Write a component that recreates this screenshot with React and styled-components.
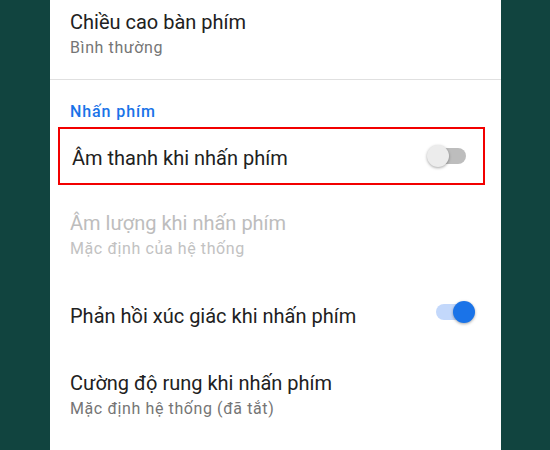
import React from "react";
import styled, { createGlobalStyle } from "styled-components";

const GlobalStyle = createGlobalStyle`
  html, body {
    margin: 0;
    padding: 0;
    background: #11443f;
    font-family: Roboto, "Noto Sans", "Liberation Sans", sans-serif;
  }
`;

const Switch = ({ on }) => (
  <SwitchBox $on={on}>
    <Track $on={on} />
    <Thumb $on={on} />
  </SwitchBox>
);

const App = () => {
  return (
    <>
      <GlobalStyle />
      <Panel>
        <Row $pad="9px 26px 20px 20px">
          <Texts>
            <Title>Chiều cao bàn phím</Title>
            <Sub>Bình thường</Sub>
          </Texts>
        </Row>
        <Divider />
        <Header>Nhấn phím</Header>
        <Marked>
          <Title $shift>Âm thanh khi nhấn phím</Title>
          <Switch on={false} />
        </Marked>
        <Row $pad="22px 26px 21px 20px">
          <Texts>
            <Title $disabled>Âm lượng khi nhấn phím</Title>
            <Sub $disabled>Mặc định của hệ thống</Sub>
          </Texts>
        </Row>
        <Row $pad="22px 26px 20px 20px">
          <Title>Phản hồi xúc giác khi nhấn phím</Title>
          <Switch on={true} />
        </Row>
        <Row>
          <Texts>
            <Title>Cường độ rung khi nhấn phím</Title>
            <Sub>Mặc định hệ thống (đã tắt)</Sub>
          </Texts>
        </Row>
      </Panel>
    </>
  );
};

export default App;

const Panel = styled.div`
  margin: 0 49px 0 50px;
  min-height: 100vh;
  background: #ffffff;
  display: flex;
  flex-direction: column;
`;

const Row = styled.div`
  display: flex;
  align-items: center;
  justify-content: space-between;
  padding: ${(p) => p.$pad || "21px 26px 21px 20px"};
`;

const Texts = styled.div`
  display: flex;
  flex-direction: column;
  gap: 2px;
`;

const Title = styled.div`
  font-size: 20px;
  line-height: 26px;
  color: ${(p) => (p.$disabled ? "#bdbdbd" : "#212121")};
  margin-top: ${(p) => (p.$shift ? "4px" : "0")};
`;

const Sub = styled.div`
  font-size: 16px;
  line-height: 22px;
  letter-spacing: 0.6px;
  color: ${(p) => (p.$disabled ? "#c2c2c2" : "#757575")};
`;

const Divider = styled.div`
  height: 1px;
  background: #e0e0e0;
`;

const Header = styled.div`
  padding: 22px 20px 0;
  font-size: 16px;
  line-height: 20px;
  letter-spacing: 0.9px;
  font-weight: 500;
  color: #1a73e8;
`;

const Marked = styled.div`
  box-sizing: border-box;
  height: 58px;
  margin: 5px 16px 3px 8px;
  border: 2px solid #f20000;
  display: flex;
  align-items: center;
  justify-content: space-between;
  padding: 0 14px 0 12px;
`;

const SwitchBox = styled.div`
  position: relative;
  width: 42px;
  height: 24px;
  flex-shrink: 0;
  transform: translateY(${(p) => (p.$on ? "-4px" : "0")});
`;

const Track = styled.div`
  position: absolute;
  left: 3px;
  right: 3px;
  top: 4px;
  height: 16px;
  border-radius: 8px;
  background: ${(p) => (p.$on ? "#c3d8fb" : "#bdbdbd")};
`;

const Thumb = styled.div`
  position: absolute;
  top: 1px;
  left: ${(p) => (p.$on ? "20px" : "0")};
  width: 22px;
  height: 22px;
  border-radius: 50%;
  background: ${(p) => (p.$on ? "#1a73e8" : "#ececec")};
  box-shadow: 0 1px 3px rgba(0, 0, 0, 0.35);
`;
